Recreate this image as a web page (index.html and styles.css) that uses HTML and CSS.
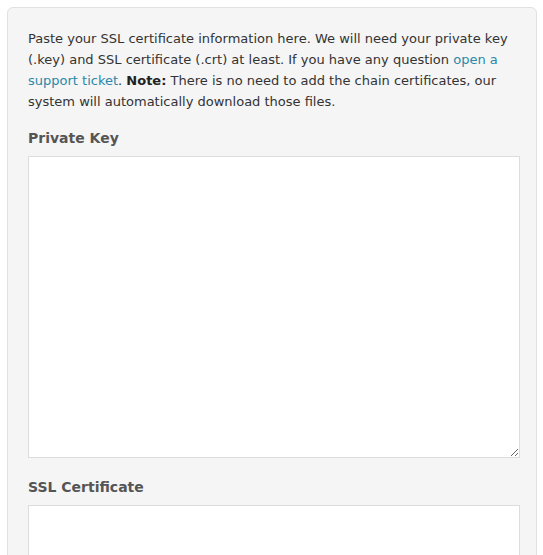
FILE: index.html
```html
<!DOCTYPE html>
<html>
<head>
<meta charset="utf-8">
<link rel="stylesheet" href="styles.css">
</head>
<body>
<div class="panel">
  <p class="intro">Paste your SSL certificate information here. We will need your private key (.key) and SSL certificate (.crt) at least. If you have any question <a href="#">open a support ticket</a>. <b>Note:</b> There is no need to add the chain certificates, our system will automatically download those files.</p>
  <div class="field">
    <label class="label">Private Key</label>
    <textarea class="box"></textarea>
  </div>
  <div class="field">
    <label class="label">SSL Certificate</label>
    <textarea class="box"></textarea>
  </div>
</div>
</body>
</html>
```

FILE: styles.css
```css
html, body {
  margin: 0;
  padding: 0;
  background: #fff;
  font-family: "DejaVu Sans", sans-serif;
  color: #333;
}
body {
  padding: 7px 6px 0 7px;
}
.panel {
  background: #f5f5f5;
  border: 1px solid #e1e1e1;
  border-radius: 6px;
  padding: 20px 16px 20px 20px;
}
.intro {
  margin: 0 0 16px;
  font-size: 13px;
  line-height: 21px;
}
.intro a {
  color: #2b88a8;
  text-decoration: none;
}
.intro b {
  color: #222;
}
.field {
  display: flex;
  flex-direction: column;
  margin-bottom: 19px;
}
.label {
  font-size: 14px;
  font-weight: bold;
  color: #555;
  line-height: 20px;
  margin-bottom: 8px;
}
.box {
  display: block;
  width: 100%;
  box-sizing: border-box;
  height: 302px;
  border: 1px solid #dcdcdc;
  background: #fff;
  margin: 0;
  resize: vertical;
}
```
